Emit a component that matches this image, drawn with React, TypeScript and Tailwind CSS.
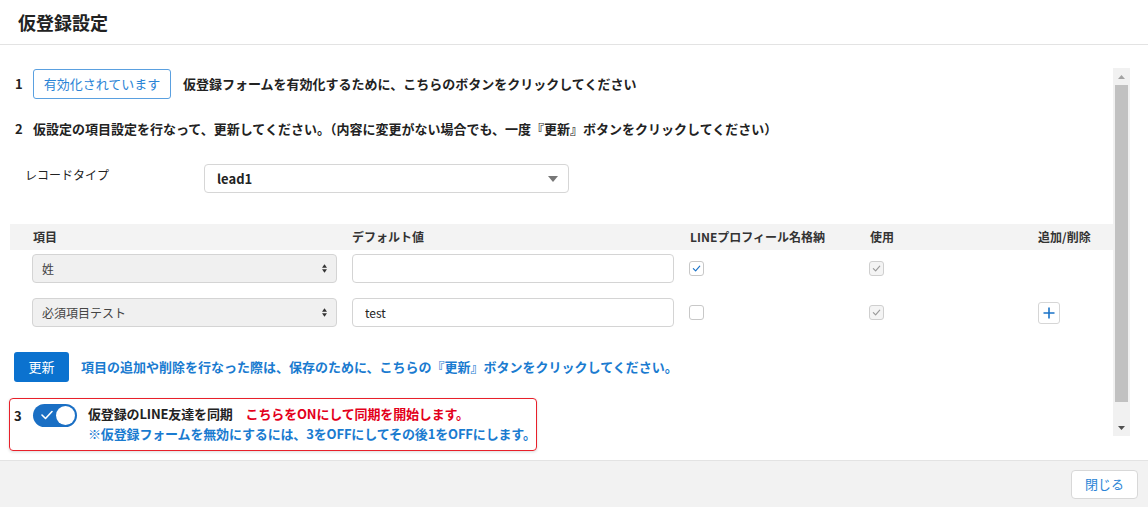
import React, { useState } from "react";

type FieldRow = {
  item: string;
  defaultValue: string;
  storeProfile: boolean;
  canAdd: boolean;
};

const rows: FieldRow[] = [
  { item: "姓", defaultValue: "", storeProfile: true, canAdd: false },
  { item: "必須項目テスト", defaultValue: "test", storeProfile: false, canAdd: true },
];

function Check({ checked, disabled }: { checked: boolean; disabled?: boolean }) {
  return (
    <span
      className={`flex h-[15px] w-[15px] items-center justify-center rounded-[3px] border ${
        disabled ? "border-[#cfcfcf] bg-[#f4f4f4]" : "border-[#c8c8c8] bg-white"
      }`}
    >
      {checked && (
        <svg width="9" height="9" viewBox="0 0 10 10" fill="none">
          <path
            d="M1.5 5.2 L4 7.6 L8.6 2.4"
            stroke={disabled ? "#9a9a9a" : "#1a73c8"}
            strokeWidth="1.3"
            strokeLinecap="round"
            strokeLinejoin="round"
          />
        </svg>
      )}
    </span>
  );
}

export default function App() {
  const [enabled, setEnabled] = useState(true);

  return (
    <div
      className="flex h-[507px] w-[1148px] flex-col bg-white text-[#222]"
      style={{ fontFamily: '"Noto Sans CJK JP", "Noto Sans", sans-serif' }}
    >
      <div className="flex h-[45px] shrink-0 items-center border-b border-[#e3e3e3] pl-[18px]">
        <h1 className="text-[18px] font-bold leading-none">仮登録設定</h1>
      </div>

      <div className="flex min-h-0 flex-1 pt-[23px]">
        <div className="flex w-[1113px] flex-col pl-[10px] pt-[1px] text-[13px]">
          <div className="flex h-[30px] items-center pl-[5px]">
            <span className="w-[18px] font-bold">1</span>
            <button className="h-[30px] w-[138px] rounded-[3px] border border-[#5aa0e0] text-[13px] text-[#2a84d6]">
              有効化されています
            </button>
            <span className="ml-[12px] font-bold">
              仮登録フォームを有効化するために、こちらのボタンをクリックしてください
            </span>
          </div>

          <div className="mt-[20px] flex h-[20px] items-center pl-[5px] font-bold">
            <span className="w-[18px]">2</span>
            <span>
              仮設定の項目設定を行なって、更新してください。（内容に変更がない場合でも、一度『更新』ボタンをクリックしてください）
            </span>
          </div>

          <div className="mt-[25px] flex h-[29px] items-start">
            <span className="w-[194px] pl-[15px] pt-[2px] text-[12px]">レコードタイプ</span>
            <div className="flex h-[29px] w-[365px] items-center justify-between rounded-[4px] border border-[#d6d6d6] pl-[12px] pr-[10px]">
              <span className="text-[13px] font-bold">lead1</span>
              <svg width="10" height="6" viewBox="0 0 10 6">
                <path d="M0 0 L10 0 L5 6 Z" fill="#777" />
              </svg>
            </div>
          </div>

          <div className="mt-[31px] grid h-[26px] grid-cols-[320px_337px_180px_169px_1fr] items-center bg-[#f3f3f3] pl-[22px] text-[12px] font-bold text-[#333]">
            <span className="pl-[1px]">項目</span>
            <span>デフォルト値</span>
            <span className="pl-[1px]">LINEプロフィール名格納</span>
            <span className="pl-[1px]">使用</span>
            <span>追加/削除</span>
          </div>

          <div className="flex flex-col gap-[15px] pt-[4px]">
            {rows.map((row) => (
              <div
                key={row.item}
                className="grid h-[29px] grid-cols-[320px_337px_180px_169px_1fr] items-center pl-[22px]"
              >
                <div className="flex h-[29px] w-[305px] items-center justify-between rounded-[4px] border border-[#d4d4d4] bg-[#f0f0f0] pl-[9px] pr-[9px] text-[12px] text-[#444]">
                  <span>{row.item}</span>
                  <svg width="5" height="9" viewBox="0 0 6 10">
                    <path d="M3 0 L6 4 L0 4 Z" fill="#333" />
                    <path d="M0 6 L6 6 L3 10 Z" fill="#333" />
                  </svg>
                </div>
                <input
                  defaultValue={row.defaultValue}
                  className="h-[29px] w-[322px] rounded-[4px] border border-[#d4d4d4] px-[12px] text-[12px] outline-none"
                />
                <Check checked={row.storeProfile} />
                <Check checked disabled />
                <div>
                  {row.canAdd && (
                    <button className="flex h-[22px] w-[22px] items-center justify-center rounded-[3px] border border-[#d6d6d6] bg-white">
                      <svg width="12" height="12" viewBox="0 0 12 12">
                        <path d="M6 0.5 V11.5 M0.5 6 H11.5" stroke="#1a73c8" strokeWidth="1.6" />
                      </svg>
                    </button>
                  )}
                </div>
              </div>
            ))}
          </div>

          <div className="mt-[25px] flex items-center pl-[4px]">
            <button className="h-[30px] w-[55px] rounded-[3px] bg-[#0b72cf] text-[13px] text-white">
              更新
            </button>
            <span className="ml-[12px] font-bold text-[#1a7bd0]">
              項目の追加や削除を行なった際は、保存のために、こちらの『更新』ボタンをクリックしてください。
            </span>
          </div>

          <div className="ml-[-1px] mt-[16px] flex h-[53px] w-[528px] items-start rounded-[4px] border border-[#e8202a] pl-[4px] pt-[5px] shadow-[0_1px_3px_rgba(0,0,0,0.15)]">
            <span className="mt-[2px] w-[19px] text-[13px] font-bold">3</span>
            <button
              onClick={() => setEnabled(!enabled)}
              className={`relative h-[23px] w-[44px] shrink-0 rounded-full ${enabled ? "bg-[#1a6fc4]" : "bg-[#ccc]"}`}
            >
              <svg className="absolute left-[8px] top-[6px]" width="12" height="10" viewBox="0 0 12 10" fill="none">
                <path d="M1 5 L4.5 8.5 L11 1.5" stroke="white" strokeWidth="1.6" strokeLinecap="round" strokeLinejoin="round" />
              </svg>
              <span className="absolute right-[2px] top-[2px] h-[19px] w-[19px] rounded-full bg-white" />
            </button>
            <div className="ml-[11px] flex flex-col whitespace-nowrap text-[13px] font-bold leading-[20px] tracking-[-0.15px]">
              <div className="flex">
                <span>仮登録のLINE友達を同期</span>
                <span className="ml-[13px] text-[#e3001b]">こちらをONにして同期を開始します。</span>
              </div>
              <span className="text-[#1a7bd0]">
                ※仮登録フォームを無効にするには、3をOFFにしてその後1をOFFにします。
              </span>
            </div>
          </div>
        </div>

        <div className="flex h-[368px] w-[17px] flex-col bg-[#f1f1f1]">
          <div className="flex h-[17px] items-center justify-center">
            <svg width="7" height="4" viewBox="0 0 7 4">
              <path d="M0 4 L3.5 0 L7 4 Z" fill="#a3a3a3" />
            </svg>
          </div>
          <div className="mx-[2px] h-[317px] bg-[#c1c1c1]" />
          <div className="flex flex-1 items-end justify-center pb-[6px]">
            <svg width="7" height="4" viewBox="0 0 7 4">
              <path d="M0 0 L7 0 L3.5 4 Z" fill="#505050" />
            </svg>
          </div>
        </div>
      </div>

      <div className="flex h-[47px] shrink-0 items-center justify-end border-t border-[#e3e3e3] bg-[#f2f2f2] pr-[10px]">
        <button className="h-[29px] w-[67px] rounded-[4px] border border-[#d8d8d8] bg-white text-[13px] text-[#2a84d6]">
          閉じる
        </button>
      </div>
    </div>
  );
}
